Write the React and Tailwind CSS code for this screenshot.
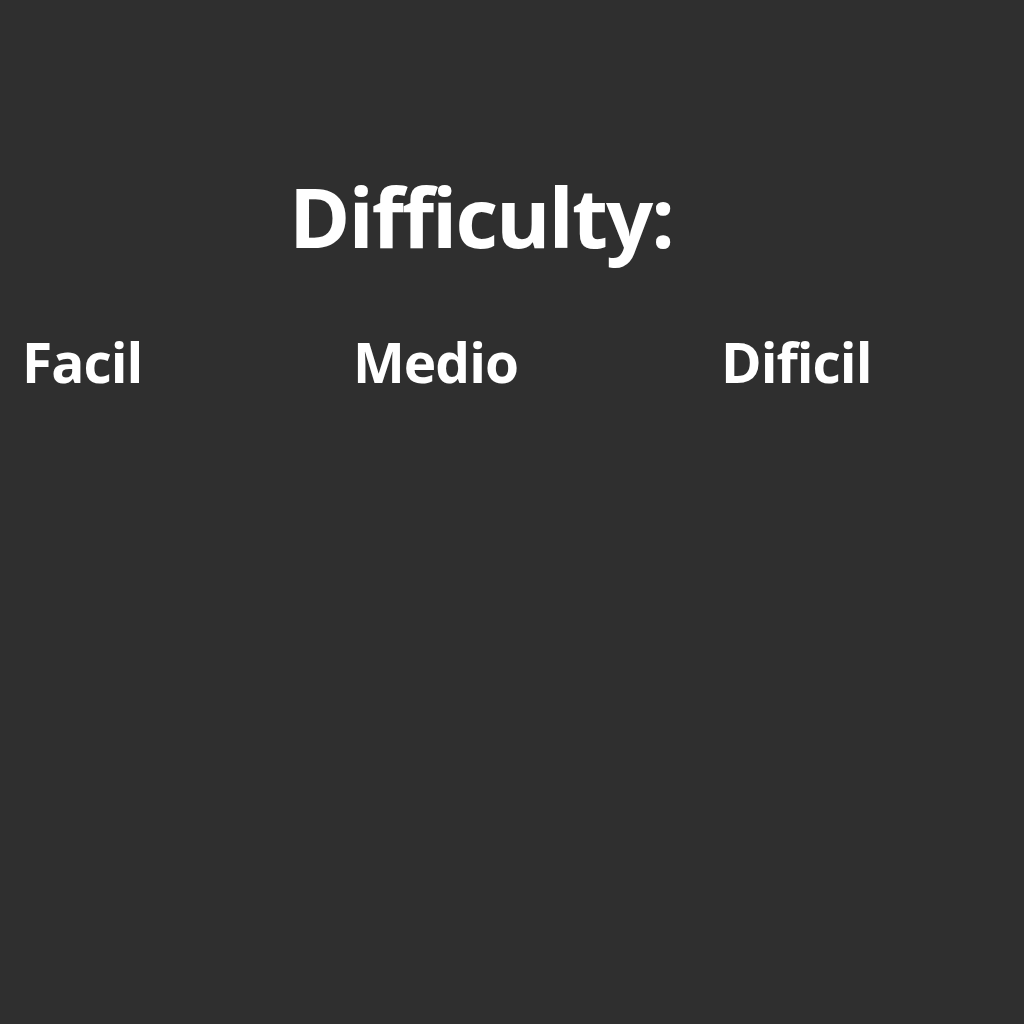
export default function App() {
  return (
    <div className="w-[1024px] h-[1024px] bg-[#2f2f2f] text-white font-bold" style={{ fontFamily: '"Open Sans", sans-serif' }}>
      <div className="pt-[166px] pl-[289px]">
        <h1 className="text-[83px] leading-[100px] tracking-[-2px]">Difficulty:</h1>
      </div>
      <div className="flex mt-[61px] text-[55px] leading-[70px] tracking-[-1px]">
        <span className="ml-[22px] w-[331px]">Facil</span>
        <span className="w-[368px]">Medio</span>
        <span>Dificil</span>
      </div>
    </div>
  );
}
